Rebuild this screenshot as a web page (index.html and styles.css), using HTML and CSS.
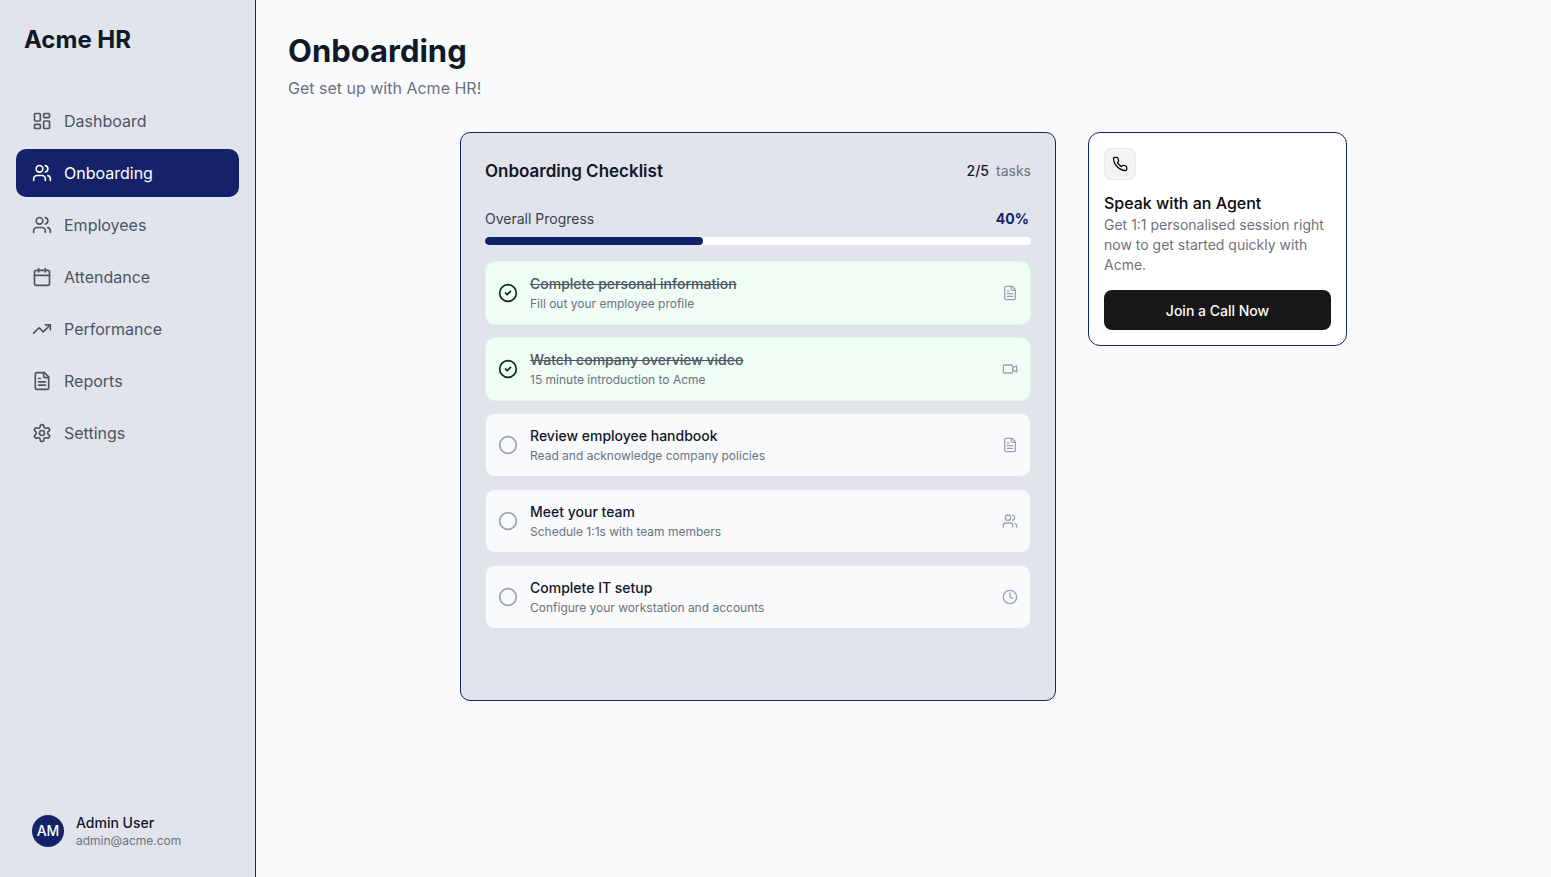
FILE: index.html
```
<!DOCTYPE html>
<html lang="en">
<head>
    <meta charset="UTF-8">
    <meta name="viewport" content="width=device-width, initial-scale=1">
    <title>Onboarding - Acme HR</title>
    <link rel="stylesheet" href="styles.css">
</head>
<body>

<!-- shared icons -->
<svg class="sprite" aria-hidden="true">
    <symbol id="i-dashboard" viewBox="0 0 24 24"><rect x="3" y="3" width="7" height="9" rx="1"/><rect x="14" y="3" width="7" height="5" rx="1"/><rect x="14" y="12" width="7" height="9" rx="1"/><rect x="3" y="16" width="7" height="5" rx="1"/></symbol>
    <symbol id="i-users" viewBox="0 0 24 24"><path d="M16 21v-2a4 4 0 0 0-4-4H6a4 4 0 0 0-4 4v2"/><circle cx="9" cy="7" r="4"/><path d="M22 21v-2a4 4 0 0 0-3-3.87"/><path d="M16 3.13a4 4 0 0 1 0 7.75"/></symbol>
    <symbol id="i-calendar" viewBox="0 0 24 24"><path d="M8 2v4"/><path d="M16 2v4"/><rect x="3" y="4" width="18" height="18" rx="2"/><path d="M3 10h18"/></symbol>
    <symbol id="i-trend" viewBox="0 0 24 24"><path d="M22 7 13.5 15.5 8.5 10.5 2 17"/><path d="M16 7h6v6"/></symbol>
    <symbol id="i-file" viewBox="0 0 24 24"><path d="M15 2H6a2 2 0 0 0-2 2v16a2 2 0 0 0 2 2h12a2 2 0 0 0 2-2V7Z"/><path d="M14 2v4a2 2 0 0 0 2 2h4"/><path d="M10 9H8"/><path d="M16 13H8"/><path d="M16 17H8"/></symbol>
    <symbol id="i-settings" viewBox="0 0 24 24"><path d="M12.22 2h-.44a2 2 0 0 0-2 2v.18a2 2 0 0 1-1 1.73l-.43.25a2 2 0 0 1-2 0l-.15-.08a2 2 0 0 0-2.73.73l-.22.38a2 2 0 0 0 .73 2.73l.15.1a2 2 0 0 1 1 1.72v.51a2 2 0 0 1-1 1.74l-.15.09a2 2 0 0 0-.73 2.73l.22.38a2 2 0 0 0 2.73.73l.15-.08a2 2 0 0 1 2 0l.43.25a2 2 0 0 1 1 1.73V20a2 2 0 0 0 2 2h.44a2 2 0 0 0 2-2v-.18a2 2 0 0 1 1-1.73l.43-.25a2 2 0 0 1 2 0l.15.08a2 2 0 0 0 2.73-.73l.22-.39a2 2 0 0 0-.73-2.73l-.15-.08a2 2 0 0 1-1-1.74v-.5a2 2 0 0 1 1-1.74l.15-.09a2 2 0 0 0 .73-2.73l-.22-.38a2 2 0 0 0-2.73-.73l-.15.08a2 2 0 0 1-2 0l-.43-.25a2 2 0 0 1-1-1.73V4a2 2 0 0 0-2-2z"/><circle cx="12" cy="12" r="3"/></symbol>
    <symbol id="i-video" viewBox="0 0 24 24"><path d="m16 13 5.223 3.482a.5.5 0 0 0 .777-.416V7.87a.5.5 0 0 0-.752-.432L16 10.5"/><rect x="2" y="6" width="14" height="12" rx="2"/></symbol>
    <symbol id="i-clock" viewBox="0 0 24 24"><circle cx="12" cy="12" r="10"/><path d="M12 6v6l4 2"/></symbol>
    <symbol id="i-phone" viewBox="0 0 24 24"><path d="M22 16.92v3a2 2 0 0 1-2.18 2 19.79 19.79 0 0 1-8.63-3.07 19.5 19.5 0 0 1-6-6 19.79 19.79 0 0 1-3.07-8.67A2 2 0 0 1 4.11 2h3a2 2 0 0 1 2 1.72 12.84 12.84 0 0 0 .7 2.81 2 2 0 0 1-.45 2.11L8.09 9.91a16 16 0 0 0 6 6l1.27-1.27a2 2 0 0 1 2.11-.45 12.84 12.84 0 0 0 2.81.7A2 2 0 0 1 22 16.92z"/></symbol>
</svg>

<div class="app">
    <aside class="sidebar">
        <div class="brand">Acme HR</div>
        <nav class="nav">
            <a class="nav-link" href="#dashboard"><svg class="icon"><use href="#i-dashboard"/></svg>Dashboard</a>
            <a class="nav-link active" href="#onboarding"><svg class="icon"><use href="#i-users"/></svg>Onboarding</a>
            <a class="nav-link" href="#employees"><svg class="icon"><use href="#i-users"/></svg>Employees</a>
            <a class="nav-link" href="#attendance"><svg class="icon"><use href="#i-calendar"/></svg>Attendance</a>
            <a class="nav-link" href="#performance"><svg class="icon"><use href="#i-trend"/></svg>Performance</a>
            <a class="nav-link" href="#reports"><svg class="icon"><use href="#i-file"/></svg>Reports</a>
            <a class="nav-link" href="#settings"><svg class="icon"><use href="#i-settings"/></svg>Settings</a>
        </nav>
        <div class="user">
            <div class="avatar">AM</div>
            <div>
                <div class="user-name">Admin User</div>
                <div class="user-email">admin@acme.com</div>
            </div>
        </div>
    </aside>

    <main class="main">
        <h1 class="page-title">Onboarding</h1>
        <p class="page-sub">Get set up with Acme HR!</p>

        <div class="content">
            <section class="checklist">
                <div class="checklist-head">
                    <h2 class="checklist-title">Onboarding Checklist</h2>
                    <div class="count"><span class="count-num">2/5</span><span>tasks</span></div>
                </div>
                <div class="progress-head">
                    <span id="progress-label">Overall Progress</span>
                    <span class="percent">40%</span>
                </div>
                <div class="progress" role="progressbar" aria-labelledby="progress-label" aria-valuenow="40" aria-valuemin="0" aria-valuemax="100">
                    <div class="progress-bar" style="width:40%"></div>
                </div>

                <div class="tasks">
                    <label class="task">
                        <input class="check" type="checkbox" checked>
                        <span class="task-text">
                            <span class="task-title">Complete personal information</span>
                            <span class="task-desc">Fill out your employee profile</span>
                        </span>
                        <svg class="icon icon-sm"><use href="#i-file"/></svg>
                    </label>
                    <label class="task">
                        <input class="check" type="checkbox" checked>
                        <span class="task-text">
                            <span class="task-title">Watch company overview video</span>
                            <span class="task-desc">15 minute introduction to Acme</span>
                        </span>
                        <svg class="icon icon-sm"><use href="#i-video"/></svg>
                    </label>
                    <label class="task">
                        <input class="check" type="checkbox">
                        <span class="task-text">
                            <span class="task-title">Review employee handbook</span>
                            <span class="task-desc">Read and acknowledge company policies</span>
                        </span>
                        <svg class="icon icon-sm"><use href="#i-file"/></svg>
                    </label>
                    <label class="task">
                        <input class="check" type="checkbox">
                        <span class="task-text">
                            <span class="task-title">Meet your team</span>
                            <span class="task-desc">Schedule 1:1s with team members</span>
                        </span>
                        <svg class="icon icon-sm"><use href="#i-users"/></svg>
                    </label>
                    <label class="task">
                        <input class="check" type="checkbox">
                        <span class="task-text">
                            <span class="task-title">Complete IT setup</span>
                            <span class="task-desc">Configure your workstation and accounts</span>
                        </span>
                        <svg class="icon icon-sm"><use href="#i-clock"/></svg>
                    </label>
                </div>
            </section>

            <section class="agent">
                <div class="agent-icon"><svg class="icon icon-sm"><use href="#i-phone"/></svg></div>
                <h3 class="agent-title">Speak with an Agent</h3>
                <p class="agent-text">Get 1:1 personalised session right now to get started quickly with Acme.</p>
                <button class="call-btn" type="button">Join a Call Now</button>
            </section>
        </div>
    </main>
</div>

</body>
</html>
```
FILE: styles.css
```
*{
box-sizing:border-box;
}

body{
margin:0;
font-family:Inter, "Liberation Sans", sans-serif;
font-size:14px;
line-height:20px;
color:#111827;
background-color:#f9fafc;
}

h1, h2, h3, p{
margin:0;
}

.sprite{
display:none;
}

.icon{
width:20px;
height:20px;
flex-shrink:0;
fill:none;
stroke:currentColor;
stroke-width:2;
stroke-linecap:round;
stroke-linejoin:round;
}

.icon-sm{
width:16px;
height:16px;
}

.app{
display:flex;
min-height:100vh;
}

/* sidebar */
.sidebar{
display:flex;
flex-direction:column;
width:256px;
flex-shrink:0;
background-color:#e1e4eb;
border-right:1px solid #132269;
}

.brand{
padding:24px;
border-bottom:1px solid #e5e7eb;
font-size:24px;
line-height:32px;
font-weight:700;
}

.nav{
display:flex;
flex-direction:column;
flex:1;
gap:4px;
padding:16px;
}

.nav-link{
display:flex;
align-items:center;
gap:12px;
padding:12px 16px;
border-radius:10px;
font-size:16px;
line-height:24px;
color:#4b5563;
text-decoration:none;
}

.nav-link.active{
background-color:#132269;
color:#fff;
}

.user{
display:flex;
align-items:center;
gap:12px;
padding:28px 32px;
border-top:1px solid #e5e7eb;
}

.avatar{
display:flex;
align-items:center;
justify-content:center;
width:32px;
height:32px;
border-radius:50%;
background-color:#132269;
color:#fff;
font-weight:500;
}

.user-name{
font-weight:500;
}

.user-email{
font-size:12px;
line-height:16px;
color:#6b7280;
}

/* page */
.main{
flex:1;
padding:32px;
}

.page-title{
font-size:31px;
line-height:38px;
font-weight:700;
}

.page-sub{
margin-top:6px;
font-size:16px;
line-height:24px;
color:#6b7280;
}

.content{
display:grid;
grid-template-columns:minmax(0, 596fr) minmax(0, 259fr);
align-items:start;
gap:32px;
max-width:887px;
margin:32px auto 0;
}

/* checklist */
.checklist{
padding:24px 24px 71px;
border:1px solid #132269;
border-radius:10px;
background-color:#e1e4eb;
}

.checklist-head, .progress-head{
display:flex;
align-items:center;
justify-content:space-between;
}

.checklist-head{
margin-bottom:24px;
}

.checklist-title{
font-size:17px;
line-height:28px;
font-weight:600;
}

.count{
display:flex;
gap:7px;
color:#6b7280;
}

.count-num{
font-weight:500;
color:#111827;
}

.progress-head{
margin-bottom:8px;
color:#374151;
}

.percent{
padding-right:2px;
font-weight:700;
color:#132269;
}

.progress{
height:8px;
border-radius:4px;
background-color:#fff;
overflow:hidden;
}

.progress-bar{
height:100%;
border-radius:4px;
background-color:#132269;
}

.tasks{
display:flex;
flex-direction:column;
gap:12px;
margin-top:16px;
}

.task{
display:flex;
align-items:center;
gap:12px;
padding:12px;
border:1px solid #e5e7eb;
border-radius:10px;
background-color:#f9fafc;
color:#9ca3af;
}

.task:has(.check:checked){
border-color:#dcfce7;
background-color:#f0fdf4;
}

.task-text{
display:flex;
flex-direction:column;
flex:1;
gap:2px;
}

.task-title{
font-weight:500;
color:#111827;
}

.check:checked + .task-text .task-title{
color:#4b5563;
text-decoration:line-through;
}

.task-desc{
font-size:12px;
line-height:16px;
color:#6b7280;
}

.check{
appearance:none;
width:20px;
height:20px;
margin:0;
background:url("data:image/svg+xml,%3Csvg xmlns='http://www.w3.org/2000/svg' viewBox='0 0 24 24' fill='none' stroke='%239ca3af' stroke-width='2'%3E%3Ccircle cx='12' cy='12' r='10'/%3E%3C/svg%3E");
}

.check:checked{
background:url("data:image/svg+xml,%3Csvg xmlns='http://www.w3.org/2000/svg' viewBox='0 0 24 24' fill='none' stroke='%23052e16' stroke-width='2' stroke-linecap='round' stroke-linejoin='round'%3E%3Ccircle cx='12' cy='12' r='10'/%3E%3Cpath d='m9 12 2 2 4-4'/%3E%3C/svg%3E");
}

/* agent card */
.agent{
padding:15px;
border:1px solid #132269;
border-radius:12px;
background-color:#fff;
}

.agent-icon{
display:flex;
align-items:center;
justify-content:center;
width:32px;
height:32px;
border:1px solid #e5e7eb;
border-radius:8px;
background-color:#f4f4f5;
color:#09090b;
}

.agent-title{
margin-top:11px;
font-size:16px;
line-height:24px;
font-weight:500;
color:#09090b;
}

.agent-text{
color:#71717a;
}

.call-btn{
width:100%;
height:40px;
margin-top:15px;
border:none;
border-radius:8px;
background-color:#171717;
color:#fafafa;
font-family:inherit;
font-size:14px;
font-weight:500;
cursor:pointer;
}
```
